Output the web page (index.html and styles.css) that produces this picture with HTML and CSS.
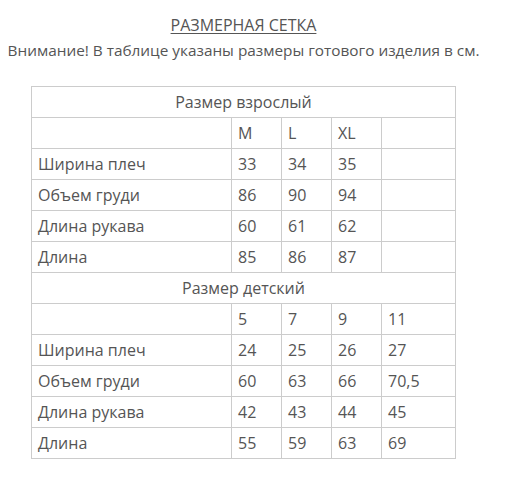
FILE: index.html
```html
<!DOCTYPE html>
<html lang="ru">
<head>
<meta charset="utf-8">
<link rel="stylesheet" href="styles.css">
</head>
<body>
<div class="page">
  <h1 class="title">РАЗМЕРНАЯ СЕТКА</h1>
  <p class="note">Внимание! В таблице указаны размеры готового изделия в см.</p>
  <table class="sizes">
    <colgroup>
      <col class="c-name"><col class="c-val"><col class="c-val"><col class="c-val"><col class="c-last">
    </colgroup>
    <tbody>
      <tr><td class="group" colspan="5">Размер взрослый</td></tr>
      <tr><td></td><td>M</td><td>L</td><td>XL</td><td></td></tr>
      <tr><td>Ширина плеч</td><td>33</td><td>34</td><td>35</td><td></td></tr>
      <tr><td>Объем груди</td><td>86</td><td>90</td><td>94</td><td></td></tr>
      <tr><td>Длина рукава</td><td>60</td><td>61</td><td>62</td><td></td></tr>
      <tr><td>Длина</td><td>85</td><td>86</td><td>87</td><td></td></tr>
      <tr><td class="group" colspan="5">Размер детский</td></tr>
      <tr><td></td><td>5</td><td>7</td><td>9</td><td>11</td></tr>
      <tr><td>Ширина плеч</td><td>24</td><td>25</td><td>26</td><td>27</td></tr>
      <tr><td>Объем груди</td><td>60</td><td>63</td><td>66</td><td>70,5</td></tr>
      <tr><td>Длина рукава</td><td>42</td><td>43</td><td>44</td><td>45</td></tr>
      <tr><td>Длина</td><td>55</td><td>59</td><td>63</td><td>69</td></tr>
    </tbody>
  </table>
</div>
</body>
</html>
```
FILE: styles.css
```css
html, body {
  margin: 0;
  padding: 0;
  background: #fff;
}
body {
  font-family: "Open Sans", "Liberation Sans", sans-serif;
  font-weight: 400;
  color: #555;
  font-size: 16px;
}
.page {
  width: 487px;
  padding-top: 13px;
  text-align: center;
}
.title {
  margin: 0;
  font-size: 16px;
  font-weight: 400;
  line-height: 24px;
  text-decoration: underline;
  text-underline-offset: 2px;
}
.note {
  margin: 1px 0 0;
  font-size: 15.35px;
  line-height: 24px;
  white-space: nowrap;
}
.sizes {
  margin: 24px auto 0;
  border-collapse: collapse;
  width: 424px;
  table-layout: fixed;
  text-align: left;
}
.c-name { width: 200px; }
.c-val { width: 50px; }
.c-last { width: 74px; }
.sizes td {
  border: 1px solid #ccc;
  padding: 4px 6px;
  height: 22px;
  line-height: 22px;
  font-size: 16px;
  white-space: nowrap;
}
.sizes td.group {
  text-align: center;
}
```
